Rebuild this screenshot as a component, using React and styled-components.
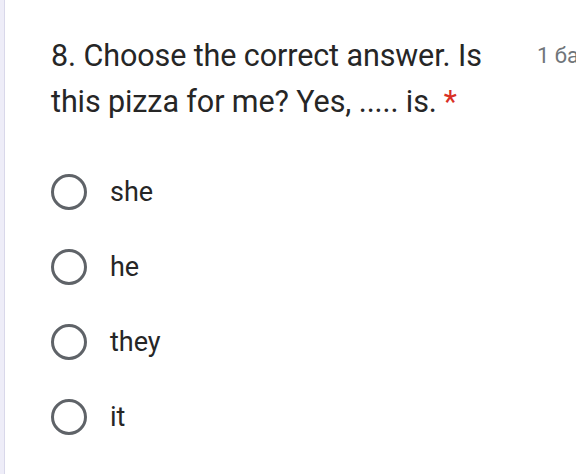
import React from "react";
import styled, { createGlobalStyle } from "styled-components";

const GlobalStyle = createGlobalStyle`
  * {
    margin: 0;
    padding: 0;
    box-sizing: border-box;
  }

  html, body {
    width: 576px;
    height: 474px;
    overflow: hidden;
    background: #ffffff;
    font-family: Roboto, "Liberation Sans", Arial, sans-serif;
  }
`;

const Page = styled.div`
  display: flex;
  height: 474px;
  background: #ffffff;
`;

const SideStrip = styled.div`
  width: 5px;
  flex-shrink: 0;
  background: #eeedf8;
  border-right: 1px solid #d9d8ea;
`;

const Card = styled.div`
  flex: 1;
  display: flex;
  flex-direction: column;
  padding: 33px 0 0 46px;
  overflow: hidden;
`;

const Header = styled.div`
  display: flex;
  align-items: flex-start;
  gap: 36px;
  white-space: nowrap;
`;

const Title = styled.div`
  width: 450px;
  flex-shrink: 0;
  white-space: normal;
  font-size: 30.5px;
  line-height: 46px;
  letter-spacing: -0.1px;
  color: #262626;
`;

const Required = styled.span`
  color: #d93025;
  margin-left: 7px;
`;

const Points = styled.div`
  font-size: 22px;
  line-height: 46px;
  color: #70757a;
`;

const Options = styled.div`
  display: flex;
  flex-direction: column;
  gap: 39px;
  margin-top: 49px;
`;

const Option = styled.label`
  display: flex;
  align-items: center;
  gap: 23px;
  height: 36px;
  font-size: 27px;
  color: #262626;
`;

const Radio = styled.span`
  width: 36px;
  height: 36px;
  border-radius: 50%;
  border: 3px solid #5f6368;
  flex-shrink: 0;
`;

const answers = ["she", "he", "they", "it"];

export default function App() {
  return (
    <>
      <GlobalStyle />
      <Page>
        <SideStrip />
        <Card>
          <Header>
            <Title>
              8. Choose the correct answer. Is this pizza for me? Yes, ..... is.
              <Required>*</Required>
            </Title>
            <Points>1 балл</Points>
          </Header>
          <Options>
            {answers.map((a) => (
              <Option key={a}>
                <Radio />
                {a}
              </Option>
            ))}
          </Options>
        </Card>
      </Page>
    </>
  );
}
